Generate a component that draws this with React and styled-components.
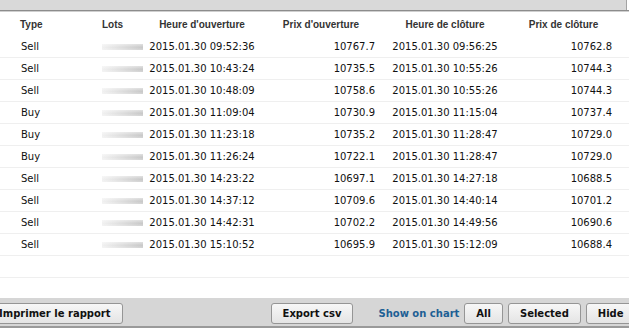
import React from 'react'
import styled, { createGlobalStyle } from 'styled-components'

const GlobalStyle = createGlobalStyle`
  html, body {
    margin: 0;
    padding: 0;
    background: #fff;
  }
  body {
    font-family: "DejaVu Sans", Verdana, sans-serif;
  }
`

const trades = [
  ['Sell', '2015.01.30 09:52:36', '10767.7', '2015.01.30 09:56:25', '10762.8'],
  ['Sell', '2015.01.30 10:43:24', '10735.5', '2015.01.30 10:55:26', '10744.3'],
  ['Sell', '2015.01.30 10:48:09', '10758.6', '2015.01.30 10:55:26', '10744.3'],
  ['Buy', '2015.01.30 11:09:04', '10730.9', '2015.01.30 11:15:04', '10737.4'],
  ['Buy', '2015.01.30 11:23:18', '10735.2', '2015.01.30 11:28:47', '10729.0'],
  ['Buy', '2015.01.30 11:26:24', '10722.1', '2015.01.30 11:28:47', '10729.0'],
  ['Sell', '2015.01.30 14:23:22', '10697.1', '2015.01.30 14:27:18', '10688.5'],
  ['Sell', '2015.01.30 14:37:12', '10709.6', '2015.01.30 14:40:14', '10701.2'],
  ['Sell', '2015.01.30 14:42:31', '10702.2', '2015.01.30 14:49:56', '10690.6'],
  ['Sell', '2015.01.30 15:10:52', '10695.9', '2015.01.30 15:12:09', '10688.4'],
]

function App() {
  return (
    <>
      <GlobalStyle />
      <Page>
        <TopBar />
        <TopRule />
        <Header>
          <HeadCell>Type</HeadCell>
          <HeadCell>Lots</HeadCell>
          <HeadCell $center>Heure d'ouverture</HeadCell>
          <HeadCell $center>Prix d'ouverture</HeadCell>
          <HeadCell $center>Heure de clôture</HeadCell>
          <HeadCell $center>Prix de clôture</HeadCell>
        </Header>
        {trades.map((t, i) => (
          <Row key={i}>
            <TypeCell>{t[0]}</TypeCell>
            <Cell><LotsMask /></Cell>
            <Cell $align="center">{t[1]}</Cell>
            <Cell $align="right">{t[2]}</Cell>
            <Cell $align="center">{t[3]}</Cell>
            <Cell $align="right">{t[4]}</Cell>
          </Row>
        ))}
        <Row />
        <Filler />
        <BottomBar>
          <Button $first>Imprimer le rapport</Button>
          <Button $gap={148}>Export csv</Button>
          <ChartLabel>Show on chart</ChartLabel>
          <Button $gap={5}>All</Button>
          <Button $gap={5}>Selected</Button>
          <Button $gap={5}>Hide</Button>
        </BottomBar>
      </Page>
    </>
  )
}

const Page = styled.div`
  width: 629px;
  height: 328px;
  display: flex;
  flex-direction: column;
  overflow: hidden;
  color: #111;
`

const TopBar = styled.div`
  flex: 0 0 10px;
  width: 627px;
  box-sizing: border-box;
  background: #d9d9d9;
  border-right: 1px solid #a3a3a3;
`

const TopRule = styled.div`
  flex: 0 0 1px;
  background: #8c8c8c;
  border-bottom: 1px solid #cfcfcf;
`

const columns = '102px 41px 118px 120px 128px 109px'

const Header = styled.div`
  display: grid;
  grid-template-columns: ${columns};
  height: 24px;
  align-items: center;
  font-family: "Liberation Sans", Arial, sans-serif;
  font-weight: bold;
  font-size: 10px;
  color: #333;
`

const HeadCell = styled.div`
  text-align: ${(p) => (p.$center ? 'center' : 'left')};
  &:first-child {
    padding-left: 20px;
  }
  white-space: nowrap;
`

const Row = styled.div`
  display: grid;
  grid-template-columns: ${columns};
  flex: 0 0 22px;
  height: 22px;
  box-sizing: border-box;
  border-bottom: 1px solid #efefef;
  align-items: center;
  font-size: 10px;
  color: #111;
`

const TypeCell = styled.div`
  padding-left: 21px;
`

const Cell = styled.div`
  padding-right: ${(p) => (p.$align === 'right' ? '6px' : '0')};
  white-space: nowrap;
  display: flex;
  justify-content: ${(p) =>
    p.$align === 'right' ? 'flex-end' : p.$align === 'center' ? 'center' : 'flex-start'};
`

const LotsMask = styled.span`
  display: block;
  width: 42px;
  height: 6px;
  margin-top: 1px;
  background:
    linear-gradient(to bottom, rgba(255, 255, 255, 0.45), rgba(255, 255, 255, 0) 55%, rgba(255, 255, 255, 0.25)),
    linear-gradient(to right, #f1f1f1, #c7c7c7);
`

const Filler = styled.div`
  flex: 1;
`

const BottomBar = styled.div`
  flex: 0 0 30px;
  box-sizing: border-box;
  background: #d6d6d6;
  border-bottom: 2px solid #9a9a9a;
  display: flex;
  align-items: flex-start;
  padding-top: 5px;
`

const Button = styled.div`
  flex-shrink: 0;
  height: 21px;
  box-sizing: border-box;
  padding: 0 11px;
  margin-left: ${(p) => (p.$first ? '-13px' : `${p.$gap || 0}px`)};
  border: 1px solid #959595;
  border-radius: 3px;
  background: linear-gradient(to bottom, #f7f7f7, #e4e4e4);
  font-weight: bold;
  font-size: 10px;
  line-height: 19px;
  color: #111;
  white-space: nowrap;
`

const ChartLabel = styled.div`
  flex-shrink: 0;
  margin-left: 25px;
  font-weight: bold;
  font-size: 10px;
  line-height: 21px;
  color: #1d5f94;
  white-space: nowrap;
`

export default App
